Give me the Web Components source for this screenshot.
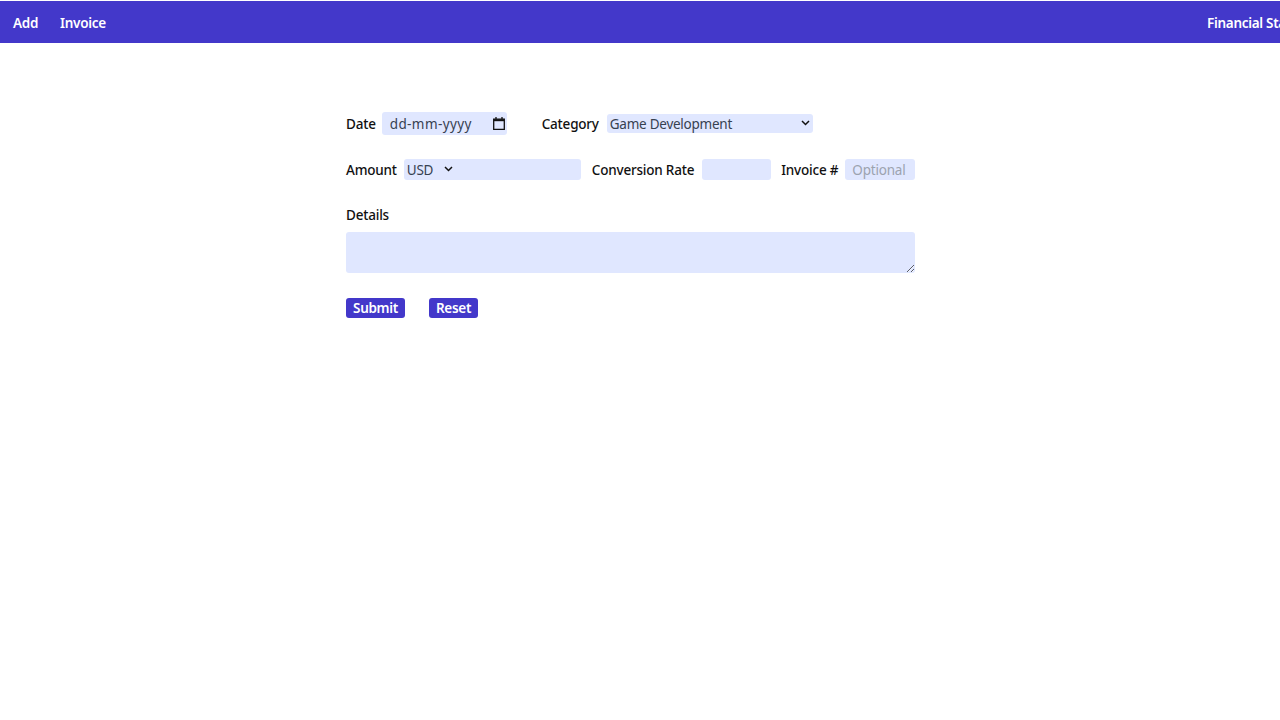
<!DOCTYPE html>
<html lang="en">
<head>
<meta charset="utf-8">
<title>Add</title>
<style>
  html, body { margin: 0; padding: 0; background: #fff; overflow: hidden; }
  body { font-family: "Noto Sans", "Open Sans", sans-serif; font-size: 13.5px; color: #111; }
</style>
</head>
<body>
<app-nav>
  <nav-link>Add</nav-link>
  <nav-link>Invoice</nav-link>
  <nav-link slot="right">Financial Statement</nav-link>
</app-nav>
<entry-form>
  <form-row gap="35" top="0">
    <form-field label="Date"><date-box style="margin-left:-1px"></date-box></form-field>
    <form-field label="Category"><select-box style="margin-left:1px" width="206" height="19" value="Game Development"></select-box></form-field>
  </form-row>
  <form-row gap="11" top="24">
    <form-field label="Amount"><select-box width="177" height="21" value="USD" chevron-left="11"></select-box></form-field>
    <form-field label="Conversion Rate"><text-box style="margin:0 -1px 0 1px" width="69"></text-box></form-field>
    <form-field label="Invoice #"><text-box width="70" placeholder="Optional"></text-box></form-field>
  </form-row>
  <details-box></details-box>
  <form-actions>
    <action-button>Submit</action-button>
    <action-button>Reset</action-button>
  </form-actions>
</entry-form>

<script>
class AppNav extends HTMLElement {
  constructor() {
    super();
    this.attachShadow({ mode: "open" }).innerHTML = `<style>
      :host { display: flex; box-sizing: border-box; margin-top: 1px; height: 42px; background: #4338ca;
        align-items: center; justify-content: space-between; overflow: hidden; white-space: nowrap; }
      .left { display: flex; gap: 22px; padding-left: 13px; }
      .right { display: block; width: 73px; flex: none; overflow: visible; }
    </style>
    <div class="left"><slot></slot></div>
    <div class="right"><slot name="right"></slot></div>`;
  }
}

class NavLink extends HTMLElement {
  constructor() {
    super();
    this.attachShadow({ mode: "open" }).innerHTML = `<style>
      :host { display: block; color: #fff; font-weight: 600; font-size: 13.5px; letter-spacing: -.3px; line-height: 20px; padding-top: 1px; }
    </style><slot></slot>`;
  }
}

class EntryForm extends HTMLElement {
  constructor() {
    super();
    this.attachShadow({ mode: "open" }).innerHTML = `<style>
      :host { display: block; width: 569px; margin: 69px 0 0 346px; }
    </style><slot></slot>`;
  }
}

class FormRow extends HTMLElement {
  constructor() {
    super();
    const gap = this.getAttribute("gap");
    const top = this.getAttribute("top");
    this.attachShadow({ mode: "open" }).innerHTML = `<style>
      :host { display: flex; align-items: center; gap: ${gap}px; margin-top: ${top}px; }
    </style><slot></slot>`;
  }
}

class FormField extends HTMLElement {
  constructor() {
    super();
    this.attachShadow({ mode: "open" }).innerHTML = `<style>
      :host { display: flex; align-items: center; gap: 7px; }
      label { font-weight: 500; color: #111; font-size: 13.5px; letter-spacing: -.2px; line-height: 20px; white-space: nowrap; }
    </style><label>${this.getAttribute("label")}</label><slot></slot>`;
  }
}

class DateBox extends HTMLElement {
  constructor() {
    super();
    this.attachShadow({ mode: "open" }).innerHTML = `<style>
      :host { display: flex; box-sizing: border-box; width: 125px; height: 23px; align-items: center;
        justify-content: space-between; padding: 0 2px 0 8px; background: #e0e7ff; border-radius: 3px; }
      span { color: #374151; font-size: 13.5px; line-height: 20px; letter-spacing: .4px; padding-top: 1px; }
      svg { display: block; margin-top: 0; }
    </style>
    <span>dd-mm-yyyy</span>
    <svg width="12" height="13" viewBox="0 0 12 13" fill="none" stroke="#111" aria-hidden="true">
      <path d="M.7 2.2h10.6v10.1H.7z" stroke-width="1.3"/>
      <path d="M.7 3.2h10.6" stroke-width="2"/>
      <path d="M3 0v2M9 0v2" stroke-width="1.3"/>
    </svg>`;
  }
}

class SelectBox extends HTMLElement {
  constructor() {
    super();
    const w = this.getAttribute("width");
    const h = this.getAttribute("height");
    const left = this.getAttribute("chevron-left");
    this.attachShadow({ mode: "open" }).innerHTML = `<style>
      :host { display: flex; box-sizing: border-box; width: ${w}px; height: ${h}px; align-items: center;
        padding: 0 3px 0 3px; background: #e0e7ff; border-radius: 3px; }
      span { color: #374151; font-size: 13.5px; letter-spacing: -.25px; line-height: 19px; padding-top: 2px; white-space: nowrap; }
      svg { display: block; flex: none; margin-left: ${left ? left + "px" : "auto"}; margin-top: -2px; }
    </style>
    <span>${this.getAttribute("value")}</span>
    <svg width="9" height="6" viewBox="0 0 9 6" fill="none" stroke="#111" stroke-width="1.5" aria-hidden="true">
      <path d="M1 1l3.5 3.5L8 1"/>
    </svg>`;
  }
}

class TextBox extends HTMLElement {
  constructor() {
    super();
    const ph = this.getAttribute("placeholder") || "";
    this.attachShadow({ mode: "open" }).innerHTML = `<style>
      :host { display: block; }
      input { display: block; box-sizing: border-box; width: ${this.getAttribute("width")}px; height: 21px;
        border: 0; outline: 0; padding: 0 7px; background: #e0e7ff; border-radius: 3px;
        font: 13.5px "Noto Sans", "Open Sans", sans-serif; letter-spacing: -.2px; color: #374151; }
      input::placeholder { color: #9ca3af; opacity: 1; }
    </style><input type="text" placeholder="${ph}">`;
  }
}

class DetailsBox extends HTMLElement {
  constructor() {
    super();
    this.attachShadow({ mode: "open" }).innerHTML = `<style>
      :host { display: block; margin-top: 25px; }
      label { display: block; font-weight: 500; color: #111; font-size: 13.5px; letter-spacing: -.2px; line-height: 20px; margin-bottom: 7px; }
      textarea { display: block; box-sizing: border-box; width: 569px; height: 41px; border: 0; outline: 0;
        padding: 4px 7px; background: #e0e7ff; border-radius: 3px; font: inherit; margin: 0; }
    </style><label>Details</label><textarea></textarea>`;
  }
}

class FormActions extends HTMLElement {
  constructor() {
    super();
    this.attachShadow({ mode: "open" }).innerHTML = `<style>
      :host { display: flex; gap: 24px; margin-top: 25px; }
    </style><slot></slot>`;
  }
}

class ActionButton extends HTMLElement {
  constructor() {
    super();
    this.attachShadow({ mode: "open" }).innerHTML = `<style>
      :host { display: block; }
      button { display: block; height: 20px; border: 0; padding: 1px 7px 0; background: #4338ca; color: #fff;
        border-radius: 3px; font: 600 13.5px/19px "Noto Sans", "Open Sans", sans-serif; letter-spacing: -.3px; }
    </style><button type="button"><slot></slot></button>`;
  }
}

customElements.define("app-nav", AppNav);
customElements.define("nav-link", NavLink);
customElements.define("entry-form", EntryForm);
customElements.define("form-row", FormRow);
customElements.define("form-field", FormField);
customElements.define("date-box", DateBox);
customElements.define("select-box", SelectBox);
customElements.define("text-box", TextBox);
customElements.define("details-box", DetailsBox);
customElements.define("form-actions", FormActions);
customElements.define("action-button", ActionButton);
</script>
</body>
</html>
